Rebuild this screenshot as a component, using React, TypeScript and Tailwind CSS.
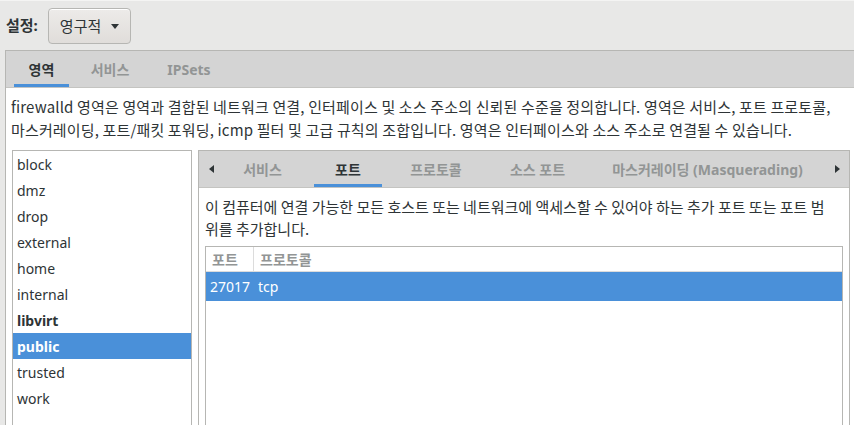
const zones = ["block", "dmz", "drop", "external", "home", "internal", "libvirt", "public", "trusted", "work"];

const FONT = "font-['Noto_Sans','Noto_Sans_CJK_KR',sans-serif]";
const KR = "font-['Noto_Sans_CJK_KR','Noto_Sans',sans-serif]";

export default function App() {
  return (
    <div className={`w-[854px] h-[425px] overflow-hidden bg-[#e8e8e7] flex flex-col text-[#2e3436] ${FONT}`}>
      {/* header bar */}
      <div className="h-[50px] shrink-0 flex items-center border-t border-[#f4f4f3] pl-[6px]">
        <span className="text-[15px] font-bold">설정:</span>
        <button className="ml-[10px] mt-[1px] h-[36px] w-[83px] rounded-[4px] border border-[#b6b6b3] bg-gradient-to-b from-[#edebe9] to-[#e0ddda] flex items-center pl-[11px] text-[15px] shadow-[inset_0_1px_white]">
          <span>영구적</span>
          <svg width="8" height="5" viewBox="0 0 8 5" className="ml-[10px]">
            <path d="M0 0H8L4 5Z" fill="#2e3436" />
          </svg>
        </button>
      </div>

      {/* outer notebook */}
      <div className="flex-1 ml-[5px] border-l border-t border-[#b6b6b3] flex flex-col bg-white">
        <div className="h-[37px] shrink-0 bg-[#d4d4d4] border-b border-[#c4c4c1] flex items-stretch pl-[8px] text-[14px]">
          <div className="w-[55px] flex items-center justify-center font-bold border-b-[3px] border-[#4a90d9] pt-[3px]">영역</div>
          <div className="w-[54px] ml-[14px] flex items-center justify-center font-bold text-[#929595]">서비스</div>
          <div className="w-[72px] ml-[16px] flex items-center justify-center font-bold text-[#929595]">IPSets</div>
        </div>

        <div className={`pl-[5px] pt-[7px] text-[15px] leading-[23px] tracking-[0.15px] whitespace-nowrap ${KR}`}>
          <p>firewalld 영역은 영역과 결합된 네트워크 연결, 인터페이스 및 소스 주소의 신뢰된 수준을 정의합니다. 영역은 서비스, 포트 프로토콜,</p>
          <p>마스커레이딩, 포트/패킷 포워딩, icmp 필터 및 고급 규칙의 조합입니다. 영역은 인터페이스와 소스 주소로 연결될 수 있습니다.</p>
        </div>

        <div className="flex flex-1 pl-[6px] pt-[9px]">
          {/* zone list */}
          <div className="w-[180px] shrink-0 border-x border-t border-[#b6b6b3] text-[14px] bg-white">
            {zones.map((z) => (
              <div
                key={z}
                className={`h-[26px] flex items-center pl-[4px] pt-[1px] ${
                  z === "public" ? "bg-[#4a90d9] text-white font-bold" : z === "libvirt" ? "font-bold" : ""
                }`}
              >
                {z}
              </div>
            ))}
          </div>

          {/* inner notebook */}
          <div className="ml-[6px] w-[652px] shrink-0 border-x border-t border-[#b6b6b3] flex flex-col">
            <div className="h-[37px] shrink-0 bg-[#d4d4d4] border-b border-[#c4c4c1] flex items-stretch text-[14px] font-bold text-[#929595]">
              <div className="w-[23px] flex items-center justify-center pl-[2px]">
                <svg width="5" height="8" viewBox="0 0 5 8"><path d="M5 0V8L0 4Z" fill="#2e3436" /></svg>
              </div>
              <div className="w-[81px] flex items-center justify-center">서비스</div>
              <div className="w-[68px] ml-[11px] flex items-center justify-center text-[#2e3436] border-b-[3px] border-[#4a90d9] pt-[3px]">포트</div>
              <div className="w-[96px] ml-[6px] flex items-center justify-center">프로토콜</div>
              <div className="w-[99px] ml-[4px] flex items-center justify-center">소스 포트</div>
              <div className="w-[231px] ml-[5px] flex items-center justify-center whitespace-nowrap">마스커레이딩 (Masquerading)</div>
              <div className="flex-1 flex items-center justify-center pl-[2px]">
                <svg width="5" height="8" viewBox="0 0 5 8"><path d="M0 0V8L5 4Z" fill="#2e3436" /></svg>
              </div>
            </div>

            <div className="flex-1 flex flex-col px-[6px] bg-white">
              <div className={`pt-[8px] text-[15px] leading-[22px] whitespace-nowrap ${KR}`}>
                <p>이 컴퓨터에 연결 가능한 모든 호스트 또는 네트워크에 액세스할 수 있어야 하는 추가 포트 또는 포트 범</p>
                <p>위를 추가합니다.</p>
              </div>

              <div className="mt-[6px] flex-1 border-x border-t border-[#b6b6b3] text-[14px]">
                <div className="h-[25px] flex items-stretch border-b border-[#dcdcdc] font-bold text-[#929595]">
                  <div className="w-[48px] pl-[6px] flex items-center border-r border-[#dcdcdc]">포트</div>
                  <div className="pl-[6px] flex items-center">프로토콜</div>
                </div>
                <div className="h-[29px] flex items-center bg-[#4a90d9] text-white">
                  <span className="pl-[4px] w-[52px]">27017</span>
                  <span>tcp</span>
                </div>
              </div>
            </div>
          </div>
        </div>
      </div>
    </div>
  );
}
